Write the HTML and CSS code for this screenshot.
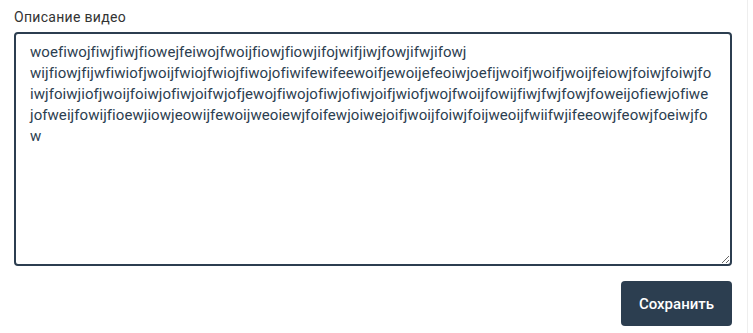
FILE: index.html
```html
<!DOCTYPE html>
<html lang="ru">
<head>
<meta charset="utf-8">
<title>Описание видео</title>
<link rel="stylesheet" href="styles.css">
</head>
<body>
<div class="panel">
  <label class="field-label" for="desc">Описание видео</label>
  <textarea id="desc" class="field-input">woefiwojfiwjfiwjfiowejfeiwojfwoijfiowjfiowjifojwifjiwjfowjifwjifowj
wijfiowjfijwfiwiofjwoijfwiojfwiojfiwojofiwifewifeewoifjewoijefeoiwjoefijwoifjwoifjwoijfeiowjfoiwjfoiwjfo
iwjfoiwjiofjwoijfoiwjofiwjoifwjofjewojfiwojofiwjofiwjoifjwiofjwojfwoijfowijfiwjfwjfowjfoweijofiewjofiwe
jofweijfowijfioewjiowjeowijfewoijweoiewjfoifewjoiwejoifjwoijfoiwjfoijweoijfwiifwjifeeowjfeowjfoeiwjfo
w</textarea>
  <div class="actions">
    <button class="btn-save" type="button">Сохранить</button>
  </div>
</div>
</body>
</html>
```

FILE: styles.css
```css
html, body {
  margin: 0;
  padding: 0;
  background: #ffffff;
}

body {
  font-family: Roboto, "Liberation Sans", Arial, sans-serif;
}

.panel {
  box-sizing: border-box;
  width: 748px;
  height: 333px;
  padding: 7px 15px 0 14px;
  border-right: 1px solid #eeeeee;
  display: flex;
  flex-direction: column;
}

.field-label {
  display: block;
  font-size: 14px;
  line-height: 20px;
  letter-spacing: 0.3px;
  color: #333333;
  margin-bottom: 5px;
}

.field-input {
  box-sizing: border-box;
  display: block;
  width: 100%;
  height: 234px;
  margin: 0;
  padding: 8px 14px;
  border: 2px solid #2c3e50;
  border-radius: 4px;
  font-family: Roboto, "Liberation Sans", Arial, sans-serif;
  font-size: 15px;
  line-height: 21px;
  letter-spacing: 0.06px;
  color: #2c3e50;
  background: #ffffff;
  white-space: pre;
  overflow: hidden;
  outline: none;
}

.actions {
  display: flex;
  justify-content: flex-end;
  margin-top: 15px;
}

.btn-save {
  box-sizing: border-box;
  height: 45px;
  padding: 0 18px;
  border: none;
  border-radius: 4px;
  background: #2c3e50;
  color: #ffffff;
  font-family: Roboto, "Liberation Sans", Arial, sans-serif;
  font-size: 15px;
  font-weight: 500;
  cursor: pointer;
}
```
